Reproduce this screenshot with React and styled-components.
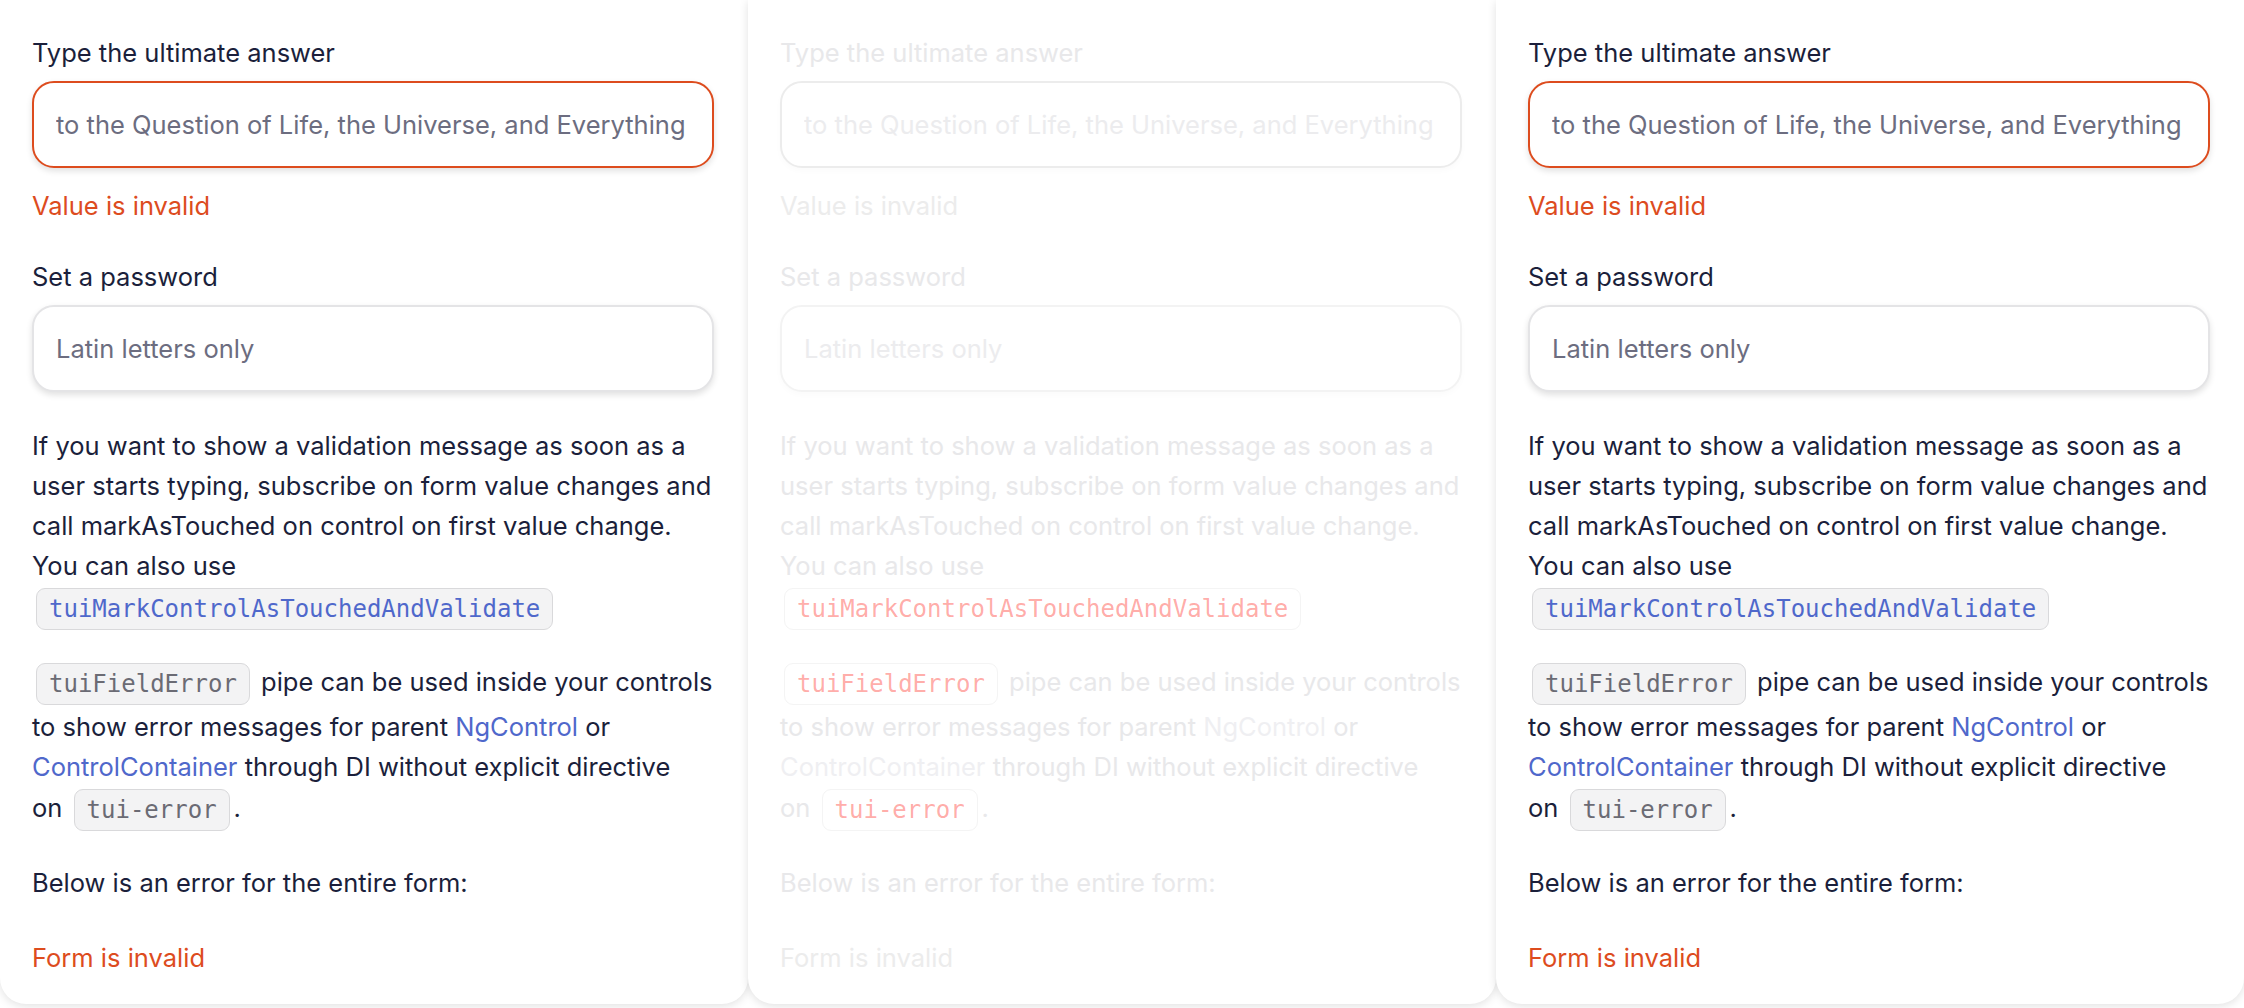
import React from 'react'
import styled, { createGlobalStyle, ThemeProvider } from 'styled-components'

const solid = {
  text: '#1b1f3b',
  placeholder: '#6c6d80',
  error: '#dd4c1e',
  link: '#4f68cb',
  code: '#6b6b74',
  codeLink: '#4f68cb',
  chipBg: '#f3f3f4',
  chipBorder: '#d9d9db',
  field: '#e4e4e6',
  fieldShadow: '0 3px 6px rgba(0, 0, 0, 0.12)',
}

// the middle copy is drawn almost transparent
const ghost = {
  text: '#e8e8ea',
  placeholder: '#ececee',
  error: '#ececec',
  link: '#efeff2',
  code: 'rgba(255, 40, 30, 0.4)',
  codeLink: 'rgba(255, 40, 30, 0.4)',
  chipBg: '#ffffff',
  chipBorder: '#f4f4f4',
  field: '#f3f3f3',
  fieldShadow: '0 3px 6px rgba(0, 0, 0, 0.02)',
}

const GlobalStyle = createGlobalStyle`
  body {
    margin: 0;
    background: #ffffff;
    overflow: hidden;
    font-family: Inter, "Noto Sans", "Liberation Sans", sans-serif;
  }
`

const Page = styled.div`
  display: flex;
  align-items: flex-start;
  height: 1008px;
`

const Panel = styled.section`
  flex: none;
  width: 748px;
  height: 1004px;
  box-sizing: border-box;
  padding: 33px 34px 0 32px;
  background: #ffffff;
  border-radius: 0 0 26px 26px;
  box-shadow: 0 2px 10px rgba(0, 0, 0, 0.12);
  color: ${(p) => p.theme.text};
  font-size: 25.5px;
  line-height: 40px;
`

const Label = styled.div`
  color: ${(p) => p.theme.text};
  margin-top: ${(p) => (p.second ? '31px' : '0')};
`

const Field = styled.input`
  display: block;
  width: 100%;
  height: 87px;
  margin-top: 8px;
  box-sizing: border-box;
  padding: 0 22px;
  border: 2px solid ${(p) => (p.invalid ? p.theme.error : p.theme.field)};
  border-radius: 22px;
  background: #ffffff;
  box-shadow: ${(p) => p.theme.fieldShadow};
  font: inherit;
  outline: none;

  &::placeholder {
    color: ${(p) => p.theme.placeholder};
    opacity: 1;
  }
`

const ErrorText = styled.div`
  color: ${(p) => p.theme.error};
  margin-top: ${(p) => p.gap || 18}px;
`

const Paragraph = styled.p`
  margin: ${(p) => p.gap || 0}px 0 0;
`

const Link = styled.a`
  color: ${(p) => p.theme.link};
  text-decoration: none;
`

const Code = styled.code`
  display: inline-block;
  margin: 2px 4px;
  padding: 5px 12px;
  border: 1px solid ${(p) => p.theme.chipBorder};
  border-radius: 9px;
  background: ${(p) => p.theme.chipBg};
  color: ${(p) => (p.link ? p.theme.codeLink : p.theme.code)};
  font-family: "DejaVu Sans Mono", "Liberation Mono", monospace;
  font-size: 24px;
  line-height: 30px;
  vertical-align: middle;
`

function ErrorDemo() {
  return (
    <Panel>
      <Label>Type the ultimate answer</Label>
      <Field invalid placeholder="to the Question of Life, the Universe, and Everything" />
      <ErrorText>Value is invalid</ErrorText>
      <Label second>Set a password</Label>
      <Field placeholder="Latin letters only" />
      <Paragraph gap={34}>
        If you want to show a validation message as soon as a user starts typing, subscribe on form value
        changes and call markAsTouched on control on first value change. You can also use{' '}
        <Code link>tuiMarkControlAsTouchedAndValidate</Code>
      </Paragraph>
      <Paragraph gap={29}>
        <Code>tuiFieldError</Code> pipe can be used inside your controls to show error messages for parent{' '}
        <Link>NgControl</Link> or <Link>ControlContainer</Link> through DI without explicit directive
        on&nbsp;<Code>tui-error</Code>.
      </Paragraph>
      <Paragraph gap={30}>Below is an error for the entire form:</Paragraph>
      <ErrorText gap={35}>Form is invalid</ErrorText>
    </Panel>
  )
}

export default function App() {
  return (
    <Page>
      <GlobalStyle />
      <ThemeProvider theme={solid}>
        <ErrorDemo />
      </ThemeProvider>
      <ThemeProvider theme={ghost}>
        <ErrorDemo />
      </ThemeProvider>
      <ThemeProvider theme={solid}>
        <ErrorDemo />
      </ThemeProvider>
    </Page>
  )
}
